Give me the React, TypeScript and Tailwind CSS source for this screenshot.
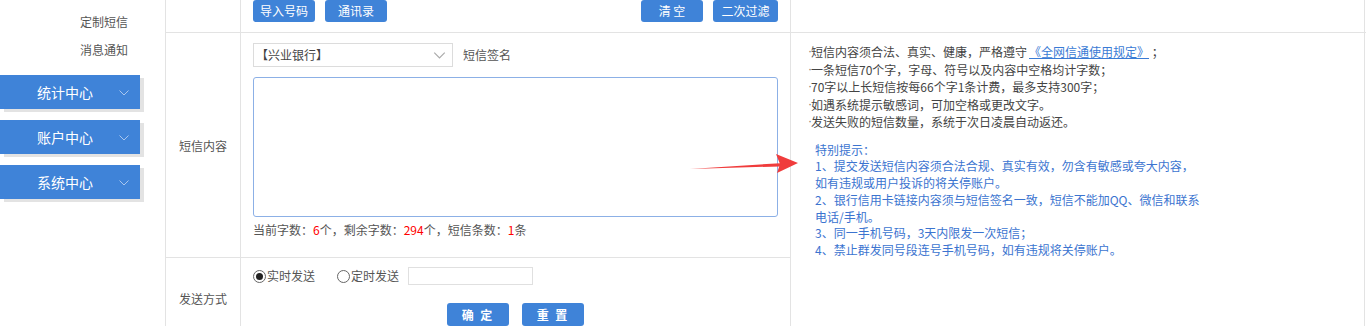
import React, { useState } from 'react';

const FONT = { fontFamily: '"Microsoft YaHei", "Noto Sans CJK SC", "Liberation Sans", sans-serif' };

const menus = ['统计中心', '账户中心', '系统中心'];

const Chevron = ({ className }: { className?: string }) => (
  <svg className={className} width="10" height="6" viewBox="0 0 10 6" fill="none">
    <path d="M0.5 0.5 L5 5 L9.5 0.5" stroke="currentColor" strokeWidth="1" />
  </svg>
);

const BlueButton = ({ label, className }: { label: string; className?: string }) => (
  <button className={`h-[22px] w-[62px] rounded-[3px] bg-[#3f83d8] text-[12px] text-white ${className ?? ''}`}>
    {label}
  </button>
);

// tight middot like the original page
const Dot = () => (
  <span className="inline-block h-[17.5px] w-[3px] overflow-visible align-top font-['Liberation_Sans'] leading-[17.5px] text-[#777]">·</span>
);

const Sidebar = () => (
  <div className="w-[165px] shrink-0">
    <div className="w-[128px] pt-[13px] text-right text-[12px] leading-[18px] text-[#555]">
      <div>定制短信</div>
      <div className="mt-[10px]">消息通知</div>
    </div>
    <div className="mt-[16px] flex flex-col gap-[11px]">
      {menus.map((m) => (
        <div
          key={m}
          className="relative flex h-[34px] w-[140px] items-center bg-[#3f83d8] pl-[37px] text-[14px] text-white shadow-[4px_3px_0_0_#e3e3e3]"
        >
          {m}
          <Chevron className="absolute right-[11px] top-[15px] text-[#a9c6ee]" />
        </div>
      ))}
    </div>
  </div>
);

const App: React.FC = () => {
  const [mode, setMode] = useState<'now' | 'later'>('now');

  return (
    <div className="relative flex h-[326px] w-[1366px] overflow-hidden bg-white text-[12px] text-[#555]" style={FONT}>
      <Sidebar />

      <div className="grid h-[400px] w-[1200px] grid-cols-[75px_550px_575px] grid-rows-[33px_225px_1fr] border-l border-r border-[#e3e3e3]">
        {/* row 1 */}
        <div className="border-b border-r border-[#e3e3e3]" />
        <div className="flex items-start justify-between border-b border-r border-[#e3e3e3] pl-[12px] pr-[12px]">
          <div className="flex gap-[10px]">
            <BlueButton label="导入号码" />
            <BlueButton label="通讯录" />
          </div>
          <div className="flex gap-[10px]">
            <BlueButton label="清 空" />
            <BlueButton label="二次过滤" className="w-[65px]" />
          </div>
        </div>
        <div className="border-b border-[#e3e3e3]" />

        {/* row 2 */}
        <div className="flex items-center justify-center border-b border-r border-[#e3e3e3] pt-[1px]">短信内容</div>
        <div className="border-b border-r border-[#e3e3e3] pl-[12px] pr-[12px] pt-[10px]">
          <div className="flex items-center">
            <div className="flex h-[24px] w-[200px] items-center justify-between border border-[#dcdcdc] pl-[2px] pr-[6px] text-[#444]">
              <span>【兴业银行】</span>
              <Chevron className="h-[7px] w-[13px] text-[#aaa]" />
            </div>
            <span className="ml-[10px]">短信签名</span>
          </div>
          <textarea className="mt-[10px] block h-[140px] w-[525px] resize-none rounded-[3px] border border-[#8cb0e6] outline-none" />
          <div className="mt-[4px] leading-[18px]">
            当前字数：<span className="text-[#ff0000]">6</span>个，剩余字数：<span className="text-[#ff0000]">294</span>个，短信条数：
            <span className="text-[#ff0000]">1</span>条
          </div>
        </div>
        <div className="row-span-2 pl-[17px] pt-[10px] leading-[17.5px] text-[#444]">
          <div>
            <Dot />短信内容须合法、真实、健康，严格遵守
            <a className="ml-[2px] text-[#3a7bd5] underline" href="#">《全网信通使用规定》</a> ；
          </div>
          <div><Dot />一条短信70个字，字母、符号以及内容中空格均计字数；</div>
          <div><Dot />70字以上长短信按每66个字1条计费，最多支持300字；</div>
          <div><Dot />如遇系统提示敏感词，可加空格或更改文字。</div>
          <div><Dot />发送失败的短信数量，系统于次日凌晨自动返还。</div>
          <div className="mt-[11px] w-[393px] pl-[7px] leading-[16.8px] text-[#3b74d0]">
            <div>特别提示：</div>
            <div>1、提交发送短信内容须合法合规、真实有效，勿含有敏感或夸大内容，如有违规或用户投诉的将关停账户。</div>
            <div>2、银行信用卡链接内容须与短信签名一致，短信不能加QQ、微信和联系电话/手机。</div>
            <div>3、同一手机号码，3天内限发一次短信；</div>
            <div>4、禁止群发同号段连号手机号码，如有违规将关停账户。</div>
          </div>
        </div>

        {/* row 3 */}
        <div className="flex items-start justify-center border-r border-[#e3e3e3] pt-[32px]">发送方式</div>
        <div className="border-r border-[#e3e3e3] pl-[12px] pt-[9px]">
          <div className="flex items-center">
            <label className="flex items-center" onClick={() => setMode('now')}>
              <span className="flex h-[13px] w-[13px] items-center justify-center rounded-full border border-[#666]">
                {mode === 'now' && <span className="h-[7px] w-[7px] rounded-full bg-[#222]" />}
              </span>
              <span className="ml-[1px]">实时发送</span>
            </label>
            <label className="ml-[22px] flex items-center" onClick={() => setMode('later')}>
              <span className="flex h-[13px] w-[13px] items-center justify-center rounded-full border border-[#666]">
                {mode === 'later' && <span className="h-[7px] w-[7px] rounded-full bg-[#222]" />}
              </span>
              <span className="ml-[1px]">定时发送</span>
            </label>
            <input className="ml-[9px] h-[18px] w-[125px] border border-[#e0e0e0] outline-none" />
          </div>
          <div className="mt-[18px] flex gap-[13px] pl-[194px]">
            <BlueButton label="确 定" className="h-[23px] font-bold tracking-[2px]" />
            <BlueButton label="重 置" className="h-[23px] font-bold tracking-[2px]" />
          </div>
        </div>
      </div>

      <svg className="pointer-events-none absolute left-[688px] top-[150px]" width="112" height="28" viewBox="0 0 112 28">
        <path d="M2 19 L92 13.2 L92 16.4 Z" fill="#f03c3c" />
        <path d="M88 4 L110 13 L89 23 L92 14 Z" fill="#f03c3c" />
      </svg>
    </div>
  );
};

export default App;
